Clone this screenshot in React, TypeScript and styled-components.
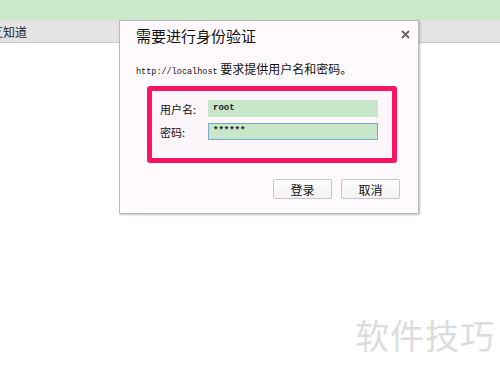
import { FC } from "react";
import { styled, createGlobalStyle } from "styled-components";

const colors = {
  green: "#cce8cb",
  tabBar: "#e4e3e4",
  dialogBg: "#fefafd",
  border: "#b9b9b9",
  red: "#fc1460",
  inputGreen: "#c8e6c9",
  text: "#1a1a1a",
  watermark: "#dcdcdc",
};

const GlobalStyle = createGlobalStyle`
  html, body {
    margin: 0;
    padding: 0;
    background: #fff;
  }
  body {
    font-family: "Noto Sans CJK SC", "Noto Sans", sans-serif;
    color: ${colors.text};
  }
`;

const App: FC = () => {
  return (
    <>
      <GlobalStyle />
      <Page>
        <TopBar />
        <TabBar>
          <TabText>艾知道</TabText>
        </TabBar>
        <Content />

        <Dialog>
          <TitleRow>
            <Title>需要进行身份验证</Title>
            <CloseButton>
              <svg width="9" height="9" viewBox="0 0 9 9">
                <path d="M1 1 L8 8 M8 1 L1 8" stroke="#666" strokeWidth="1.8" />
              </svg>
            </CloseButton>
          </TitleRow>
          <Message>
            <Url>http://localhost</Url> 要求提供用户名和密码。
          </Message>
          <Highlight>
            <FieldRow>
              <Label>用户名:</Label>
              <Input>root</Input>
            </FieldRow>
            <FieldRow>
              <Label>密码:</Label>
              <Input focused>******</Input>
            </FieldRow>
          </Highlight>
          <Buttons>
            <Button>登录</Button>
            <Button>取消</Button>
          </Buttons>
        </Dialog>

        <Watermark>软件技巧</Watermark>
      </Page>
    </>
  );
};
export default App;

const Page = styled.div`
  position: relative;
  width: 500px;
  height: 375px;
  overflow: hidden;
  display: flex;
  flex-direction: column;
`;
const TopBar = styled.div`
  height: 20px;
  background: ${colors.green};
`;
const TabBar = styled.div`
  height: 22px;
  background: ${colors.tabBar};
  border-bottom: 1px solid #c9c9c9;
  display: flex;
  align-items: center;
`;
const TabText = styled.span`
  font-size: 12px;
  margin-left: -9px;
  color: #222;
`;
const Content = styled.div`
  flex: 1;
  background: #fff;
`;
const Dialog = styled.div`
  position: absolute;
  left: 119px;
  top: 20px;
  width: 300px;
  height: 194px;
  box-sizing: border-box;
  background: ${colors.dialogBg};
  border: 1px solid ${colors.border};
  box-shadow: 1px 1px 2px rgba(0, 0, 0, 0.25);
  padding: 0 0 0 16px;
  display: flex;
  flex-direction: column;
`;
const TitleRow = styled.div`
  display: flex;
  align-items: center;
  justify-content: space-between;
  height: 28px;
  padding-right: 8px;
`;
const Title = styled.span`
  font-size: 15px;
  color: #111;
`;
const CloseButton = styled.span`
  display: flex;
  align-items: center;
  margin-top: -2px;
`;
const Message = styled.div`
  margin-top: 12px;
  font-size: 12px;
  line-height: 16px;
  color: #111;
`;
const Url = styled.span`
  font-family: "Liberation Mono", "DejaVu Sans Mono", monospace;
  font-size: 8.5px;
`;
const Highlight = styled.div`
  margin-top: 6px;
  margin-left: 11px;
  width: 250px;
  height: 77px;
  box-sizing: border-box;
  border: 5px solid ${colors.red};
  border-radius: 3px;
  background: #fdf6fb;
  padding: 9px 0 0 8px;
  display: flex;
  flex-direction: column;
  gap: 6px;
`;
const FieldRow = styled.div`
  display: flex;
  align-items: center;
`;
const Label = styled.span`
  width: 48px;
  font-size: 11px;
  color: #111;
`;
const Input = styled.div<{ focused?: boolean }>`
  width: 170px;
  height: 17px;
  box-sizing: border-box;
  background: ${colors.inputGreen};
  border: 1px solid ${(p) => (p.focused ? "#7aa7d6" : colors.inputGreen)};
  font-family: "Liberation Mono", "DejaVu Sans Mono", monospace;
  font-size: 9px;
  font-weight: 700;
  line-height: 15px;
  padding-left: 4px;
  color: #222;
`;
const Buttons = styled.div`
  display: flex;
  justify-content: flex-end;
  gap: 9px;
  margin-top: 16px;
  padding-right: 18px;
`;
const Button = styled.button`
  width: 59px;
  height: 20px;
  box-sizing: border-box;
  background: linear-gradient(#fefefe, #f3f3f3);
  border: 1px solid #c7c7c7;
  border-radius: 2px;
  font-family: "Noto Sans CJK SC", sans-serif;
  font-size: 12px;
  color: #111;
  padding: 0;
  display: flex;
  align-items: center;
  justify-content: center;
`;
const Watermark = styled.div`
  position: absolute;
  right: 5px;
  top: 310px;
  font-family: "Noto Sans CJK SC", sans-serif;
  font-size: 34px;
  letter-spacing: 1px;
  color: ${colors.watermark};
`;
